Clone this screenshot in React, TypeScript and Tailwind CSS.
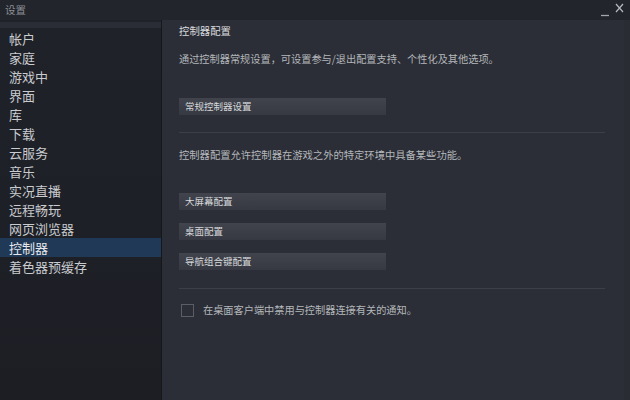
const navItems = [
	"帐户",
	"家庭",
	"游戏中",
	"界面",
	"库",
	"下载",
	"云服务",
	"音乐",
	"实况直播",
	"远程畅玩",
	"网页浏览器",
	"控制器",
	"着色器预缓存",
];

const font = { fontFamily: '"Noto Sans CJK SC", "Noto Sans", sans-serif' };

const ConfigButton = ({ label }: { label: string }) => (
	<button
		type="button"
		className="flex h-[17px] w-[207px] items-center bg-gradient-to-b from-[#41444d] to-[#363941] pl-[6px] text-left text-[9.5px] leading-none text-[#d6d8db]"
	>
		{label}
	</button>
);

const App = () => {
	return (
		<div
			className="flex h-[400px] w-[630px] flex-col overflow-hidden bg-[#2b2e36] text-[#c8cacd]"
			style={font}
		>
			{/* title bar */}
			<div className="flex h-[20px] shrink-0 items-center justify-between bg-[#22252b] pl-[5px] pr-[6px]">
				<span className="text-[10.5px] leading-none text-[#8c8f95]">设置</span>
				<div className="flex items-start gap-[5px]">
					<svg width="10" height="12" viewBox="0 0 10 12" className="mt-[3px]">
						<path d="M1 9.5H9" stroke="#a3a6ab" strokeWidth="1.3" />
					</svg>
					<svg width="9" height="10" viewBox="0 0 9 10">
						<path d="M1 1L8 9M8 1L1 9" stroke="#b5b8bc" strokeWidth="1.2" />
					</svg>
				</div>
			</div>

			<div className="flex min-h-0 grow">
				{/* sidebar */}
				<div className="flex w-[162px] shrink-0 flex-col border-r border-[#15171b] bg-gradient-to-b from-[#1f2229] to-[#1c1e24]">
					<div className="mt-[2px] h-[6px] bg-[#2a2d35]" />
					<ul className="mt-[1px] flex flex-col">
						{navItems.map((item) => (
							<li
								key={item}
								className={`flex h-[19px] items-center pl-[9px] text-[13px] leading-none ${
									item === "控制器"
										? "bg-[#1f3957] text-[#e6e8ea]"
										: "text-[#c9cbcf]"
								}`}
							>
								{item}
							</li>
						))}
					</ul>
				</div>

				{/* content */}
				<div className="flex grow flex-col pl-[17px] pr-[19px] pt-[4px]">
					<p className="text-[10.4px] leading-[14px] text-[#d9dbde]">控制器配置</p>
					<p className="mt-[14px] text-[10.2px] leading-[14px] text-[#b4b7bb]">
						通过控制器常规设置，可设置参与/退出配置支持、个性化及其他选项。
					</p>
					<div className="mt-[32px]">
						<ConfigButton label="常规控制器设置" />
					</div>
					<div className="mt-[17px] h-px bg-[#3c3f47]" />
					<p className="mt-[15px] text-[10.3px] leading-[14px] text-[#b4b7bb]">
						控制器配置允许控制器在游戏之外的特定环境中具备某些功能。
					</p>
					<div className="mt-[31px] flex flex-col gap-[13px]">
						<ConfigButton label="大屏幕配置" />
						<ConfigButton label="桌面配置" />
						<ConfigButton label="导航组合键配置" />
					</div>
					<div className="mt-[18px] h-px bg-[#3c3f47]" />
					<label className="mt-[14px] flex items-center gap-[9px] pl-[2px]">
						<span className="h-[13px] w-[13px] border border-[#5b5e65] bg-[#2b2e36]" />
						<span className="text-[10.2px] leading-[14px] text-[#b4b7bb]">
							在桌面客户端中禁用与控制器连接有关的通知。
						</span>
					</label>
				</div>

				<div className="w-[6px] shrink-0 bg-[#292c33]" />
			</div>
		</div>
	);
};

export default App;
